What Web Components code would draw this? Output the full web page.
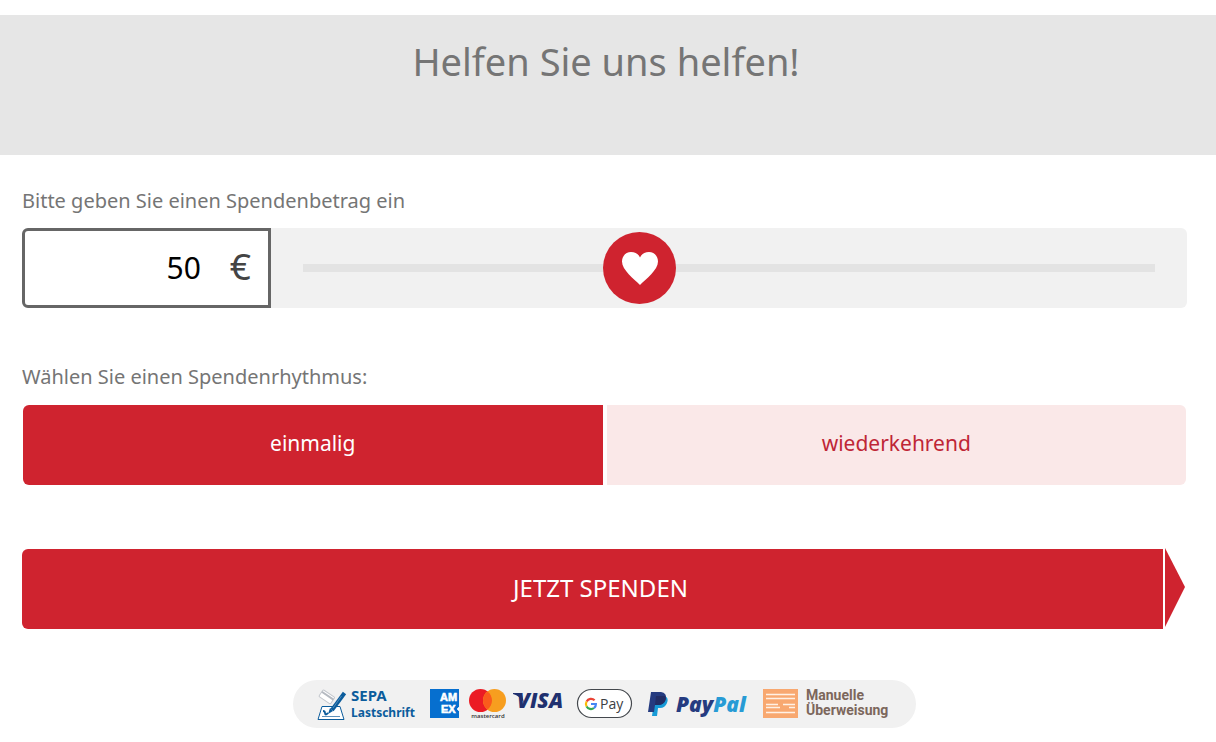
<!DOCTYPE html>
<html lang="de">
<head>
<meta charset="utf-8">
<title>Helfen Sie uns helfen!</title>
<style>
  body { margin: 0; background: #fff; font-family: "Noto Sans", "Open Sans", sans-serif; color: #757575;
    --red: #cf232f; --pale: #fae8e8; --panel: #f1f1f1; }
</style>
</head>
<body>
<donation-page>
  <donation-header>Helfen Sie uns helfen!</donation-header>
  <donation-amount>Bitte geben Sie einen Spendenbetrag ein</donation-amount>
  <donation-rhythm>Wählen Sie einen Spendenrhythmus:</donation-rhythm>
  <donation-submit>Jetzt spenden</donation-submit>
  <payment-methods></payment-methods>
</donation-page>
<script>
function define(name, html) {
  const template = document.createElement('template');
  template.innerHTML = html;
  customElements.define(name, class extends HTMLElement {
    constructor() {
      super();
      this.attachShadow({ mode: 'open' }).append(template.content.cloneNode(true));
    }
  });
}

define('donation-page', `
<style>
  :host { display: flex; flex-direction: column; padding-top: 15px; }
  ::slotted(:not(donation-header)) { margin-left: 22px; margin-right: 29px; }
  ::slotted(donation-amount) { margin-top: 32px; }
  ::slotted(donation-rhythm) { margin-top: 55px; }
  ::slotted(donation-submit) { margin-top: 64px; }
  ::slotted(payment-methods) { margin-top: 51px; margin-bottom: 14px; }
</style>
<slot></slot>`);

define('donation-header', `
<style>
  :host { display: block; background: #e6e6e6; padding: 20px 24px 68px 20px; }
  h1 { margin: 0; font-size: 38px; line-height: 52px; font-weight: 400; text-align: center; }
</style>
<h1><slot></slot></h1>`);

define('donation-amount', `
<style>
  :host { display: block; }
  .caption { display: block; font-size: 20px; line-height: 28px; margin-bottom: 13px; }
  .row { display: flex; height: 80px; background: var(--panel); border-radius: 6px; }
  .box { box-sizing: border-box; width: 249px; display: flex; align-items: center; background: #fff;
    border: 3px solid #666; border-radius: 6px 0 0 6px; padding: 0 17px 2px 0; }
  .box input { flex: 1; min-width: 0; border: 0; padding: 0; outline: 0; background: none;
    font: 30px "Noto Sans", sans-serif; color: #000; text-align: right; }
  .euro { font-size: 37px; line-height: 40px; color: #444; margin: 0 0 2px 29px; }
  .slide { flex: 1; display: flex; align-items: center; padding: 0 32px; }
  .slide input { flex: 1; min-width: 0; height: 73px; margin: 0; appearance: none; background: none; }
  .slide input::-webkit-slider-runnable-track { height: 8px; background: #e3e3e3; }
  .slide input::-webkit-slider-thumb { appearance: none; width: 73px; height: 72px; margin-top: -32px; border-radius: 50%;
    background: var(--red) url("data:image/svg+xml,%3Csvg xmlns='http://www.w3.org/2000/svg' viewBox='0 0 73 72'%3E%3Cpath fill='white' d='M37 53C31 47 19 38 19 29.500C19 24 23 20 28 20C32 20 35.500 22 37 25.500C38.500 22 42 20 46 20C51 20 55 24 55 29.500C55 38 43 47 37 53Z'/%3E%3C/svg%3E") center / 73px 72px no-repeat; }
</style>
<label class="caption" for="amount"><slot></slot></label>
<div class="row">
  <div class="box"><input id="amount" type="text" inputmode="numeric" value="50"><span class="euro">€</span></div>
  <div class="slide"><input type="range" min="0" max="130" value="50" aria-label="Spendenbetrag"></div>
</div>`);

define('donation-rhythm', `
<style>
  :host { display: block; }
  fieldset { border: 0; margin: 0; padding: 0; min-width: 0; }
  legend { padding: 0; font-size: 20px; line-height: 28px; margin-bottom: 14px; }
  .options { display: grid; grid-template-columns: 1fr 1fr; gap: 4px; padding: 0 1px; }
  label { position: relative; display: flex; align-items: center; justify-content: center; height: 80px;
    background: var(--pale); color: #bf2636; font-size: 21px; line-height: 28px; padding-bottom: 4px; box-sizing: border-box; }
  label:first-child { border-radius: 6px 0 0 6px; }
  label:last-child { border-radius: 0 6px 6px 0; }
  label:has(input:checked) { background: var(--red); color: #fff; }
  input { position: absolute; inset: 0; width: 100%; height: 100%; margin: 0; opacity: 0; }
</style>
<fieldset>
  <legend><slot></slot></legend>
  <div class="options">
    <label><input type="radio" name="rhythm" value="once" checked>einmalig</label>
    <label><input type="radio" name="rhythm" value="regular">wiederkehrend</label>
  </div>
</fieldset>`);

define('donation-submit', `
<style>
  :host { display: block; }
  button { display: flex; gap: 2px; width: 100%; border: 0; padding: 0 2px 0 0; background: none; cursor: pointer;
    color: #fff; font: 24px/32px "Noto Sans", sans-serif; text-transform: uppercase; }
  .face { flex: 1; box-sizing: border-box; height: 80px; display: flex; align-items: center; justify-content: center;
    background: var(--red); border-radius: 6px 0 0 6px; padding: 0 0 2px 16px; }
  svg { display: block; width: 20px; height: 80px; fill: var(--red); overflow: visible; }
</style>
<button type="submit"><span class="face"><slot></slot></span><svg viewBox="0 0 20 80" aria-hidden="true"><path d="M0-1L20 38L0 78Z"/></svg></button>`);

define('payment-methods', `
<style>
  :host { display: flex; justify-content: center; }
  ul { display: flex; align-items: center; gap: 16px; height: 48px; margin: 0; padding: 0 24px; border-radius: 24px;
    background: var(--panel); list-style: none; }
  li { display: flex; align-items: center; white-space: nowrap; font-weight: 700; }
  .sepa { gap: 4px; color: #0b5c9c; font-size: 15px; line-height: 17px; }
  .sepa small { display: block; font-size: 12px; }
  .cards { gap: 10px; }
  .manual { gap: 8px; color: #7c675c; font: 700 14px/15px Roboto, sans-serif; }
  .manual span { display: block; }
  .sepa div { width: 63px; }
  .manual div { width: 86px; padding-bottom: 2px; }
  svg { display: block; flex: none; overflow: visible; }
  text { font-family: "Open Sans", sans-serif; font-weight: 700; }
  .amex text { font-family: "Liberation Sans", sans-serif; font-size: 11px; }
</style>
<ul>
  <li class="sepa">
    <svg width="30" height="48" viewBox="0 0 30 48" aria-hidden="true">
      <g transform="translate(4 13) rotate(34)"><rect y="-4" width="14" height="8" rx="1" fill="#fff" stroke="#c3c7cd"/><path d="M0-1.500H14" stroke="#b5bac1" stroke-width="2"/></g>
      <path d="M5 26.500H23L27 39.500H1Z" fill="#fff" stroke="#0b5c9c"/>
      <path d="M5 36.500H23" stroke="#5e91bb"/>
      <path d="M27.500 13L15 30" stroke="#0b5c9c" stroke-width="4"/><path d="M13 28L11 34L16 31" fill="#0b5c9c"/>
      <path d="M24.500 16L16 28" stroke="#6c9cc4" stroke-width=".7"/>
      <path d="M6 31Q8 31 8 33Q8 36 11 33" stroke="#0b5c9c" stroke-width="1.800" fill="none"/>
    </svg>
    <div>SEPA<small>Lastschrift</small></div>
  </li>
  <li class="cards">
    <svg class="amex" width="29" height="48" viewBox="0 0 29 48">
      <defs><clipPath id="amex"><rect y="9" width="29" height="29"/></clipPath></defs>
      <rect y="9" width="29" height="29" fill="#066fcf"/>
      <g clip-path="url(#amex)" fill="#fff" stroke="#fff" stroke-width=".6">
        <text x="10" y="21">AM</text><text x="11" y="33">EX</text><path d="M30 26L27 29L30 32"/>
      </g>
    </svg>
    <svg width="37" height="48" viewBox="0 0 37 48">
      <circle cx="11.500" cy="20.500" r="11.500" fill="#eb1b24"/><circle cx="25.500" cy="20.500" r="11.500" fill="#f79e1f"/>
      <path d="M18.500 11.400A11.500 11.500 0 0 1 18.500 29.600A11.500 11.500 0 0 1 18.500 11.400Z" fill="#fa5b1c"/>
      <text x="19" y="38" text-anchor="middle" fill="#333" style="font-size:6px;font-weight:600">mastercard</text>
    </svg>
    <svg width="45" height="48" viewBox="0 0 45 48">
      <path d="M-3 13H3Q5 13 6 15L8 23Q4 16-3 14Z" fill="#20306f"/>
      <text x="1" y="28" fill="#20306f" font-style="italic" style="font-size:21px;font-weight:800">VISA</text>
    </svg>
  </li>
  <li>
    <svg width="55" height="48" viewBox="0 0 55 48">
      <rect x=".5" y="9.500" width="54" height="28" rx="14" fill="#fff" stroke="#44484d" stroke-width="1.200"/>
      <g fill="none" stroke-width="2.200">
        <path d="M17.600 20.300A5 5 0 0 0 9.600 21.500" stroke="#ea4335"/><path d="M9.600 21.500A5 5 0 0 0 9.600 26.500" stroke="#fbbc04"/>
        <path d="M9.600 26.500A5 5 0 0 0 17 28" stroke="#34a853"/><path d="M17 28Q19 26.500 18.900 24H14" stroke="#4285f4"/>
      </g>
      <text x="23" y="29" fill="#3c4043" style="font-size:14px;font-weight:400">Pay</text>
    </svg>
  </li>
  <li>
    <svg width="99" height="48" viewBox="0 0 99 48">
      <path d="M7 16H17Q21 18 19 23Q17 28 12 28H10L9 36H4Z" fill="#179bd7"/>
      <path d="M3 12H13Q19 13 18 19Q16 25 10 25H7L6 32H0Z" fill="#253b80"/>
      <path d="M8 16H17Q18 18 17.500 20Q16 25 10 25H7Z" fill="#222d65"/>
      <text x="28" y="32" font-style="italic" fill="#253b80" style="font-size:21px;font-weight:800">Pay<tspan fill="#279bd5">Pal</tspan></text>
    </svg>
  </li>
  <li class="manual">
    <svg width="35" height="48" viewBox="0 0 35 48" aria-hidden="true">
      <rect y="9" width="35" height="29" fill="#f8a870"/>
      <path d="M3 14.500H32M3 18.500H32M3 24.500H15M20 24.500H32M3 27.500H17M26 27.500H32M3 32.500H32" stroke="#fff1e5" stroke-width="1.500"/>
    </svg>
    <div><span>Manuelle</span><span>Überweisung</span></div>
  </li>
</ul>`);
</script>
</body>
</html>
